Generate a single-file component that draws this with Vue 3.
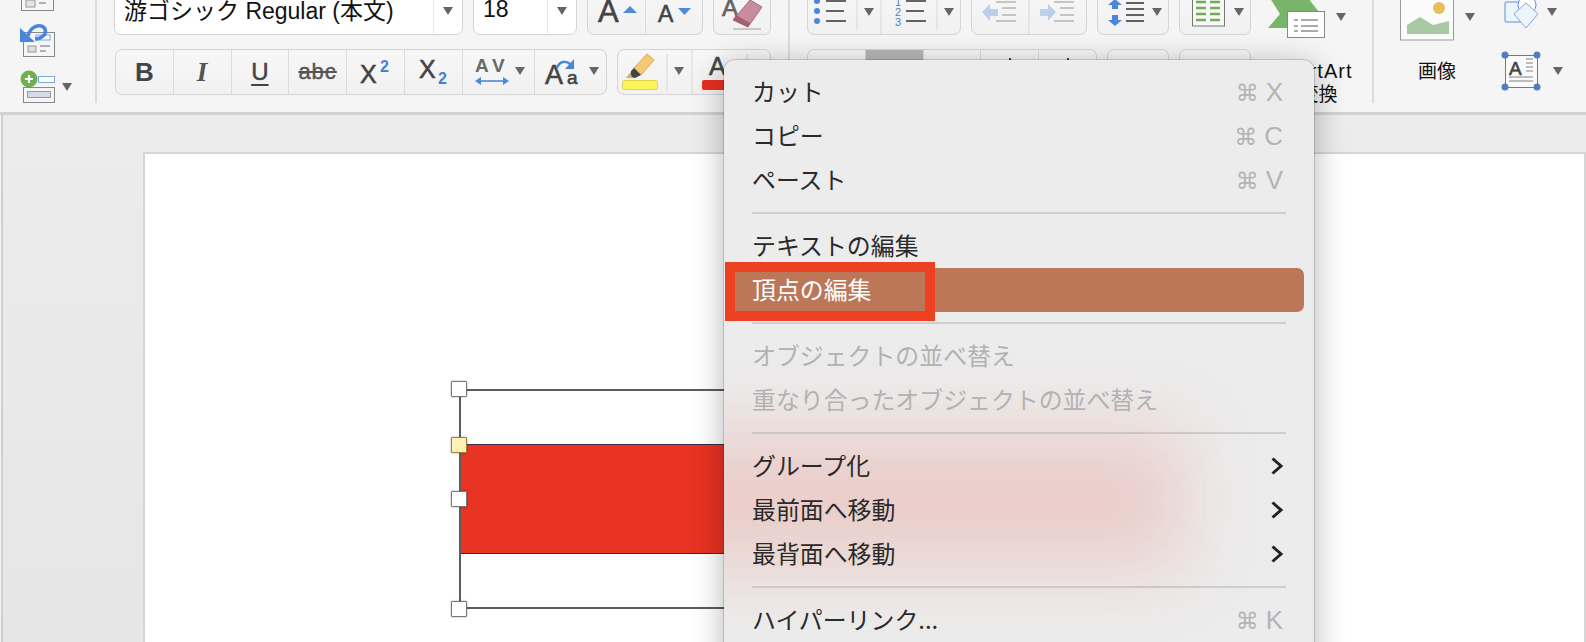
<script setup>
const menuItems = [
  { label: 'カット', shortcut: 'X' },
  { label: 'コピー', shortcut: 'C' },
  { label: 'ペースト', shortcut: 'V' },
  { sep: true },
  { label: 'テキストの編集' },
  { label: '頂点の編集', active: true },
  { sep: true },
  { label: 'オブジェクトの並べ替え', disabled: true },
  { label: '重なり合ったオブジェクトの並べ替え', disabled: true },
  { sep: true },
  { label: 'グループ化', sub: true },
  { label: '最前面へ移動', sub: true },
  { label: '最背面へ移動', sub: true },
  { sep: true },
  { label: 'ハイパーリンク...', shortcut: 'K' },
]
</script>

<template>
  <div class="app">
    <div class="ribbon">
      <section class="sec-left">
        <svg width="96" height="112" viewBox="0 0 96 112">
          <rect x="21.5" y="-5" width="32" height="15.5" fill="#f6f6f6" stroke="#888" />
          <rect x="26" y="0" width="9" height="7" fill="#dfe3ea" stroke="#999" />
          <path d="M39 3h7" stroke="#999" stroke-width="1.5" />
          <rect x="23.5" y="32.5" width="31" height="24" fill="#f6f6f6" stroke="#888" />
          <rect x="36" y="35" width="14" height="5" fill="#fff" stroke="#7da7e0" />
          <rect x="28" y="46" width="8" height="6" fill="#d9dde6" stroke="#999" />
          <path d="M40 46h10M40 51h6" stroke="#999" stroke-width="1.5" />
          <path d="M28 36c2-8 8-11 13-10 5 1 6 7 2 10-2 2-5 3-8 3" fill="none" stroke="#4a86dc" stroke-width="3.5" />
          <path d="M20 28v14h15z" fill="#4a86dc" />
          <rect x="38.5" y="76.5" width="16" height="6" fill="#fff" stroke="#7da7e0" />
          <rect x="23.5" y="87.5" width="31" height="15" fill="#f6f6f6" stroke="#888" />
          <rect x="27.5" y="91.5" width="23" height="6" fill="#d5dbe6" stroke="#999" />
          <circle cx="29" cy="79" r="8.5" fill="#6fb050" />
          <path d="M25 79h8M29 75v8" stroke="#fff" stroke-width="2.2" />
          <path d="M62 83h10l-5 8z" fill="#666" />
        </svg>
      </section>

      <section class="sec-font">
        <div class="row row-top">
          <div class="group field w-font">
            <span class="field-text">游ゴシック Regular (本文)</span>
            <span class="field-sep"></span>
            <span class="drop"></span>
          </div>
          <div class="group field w-size">
            <span class="field-text">18</span>
            <span class="field-sep"></span>
            <span class="drop"></span>
          </div>
          <div class="group w-116">
            <div class="cell w-58">
              <svg width="57" height="47" viewBox="587 -13 57 47">
                <text x="597" y="22" class="svg-m" font-size="31">A</text>
                <path d="M622 13l7-7 7 7z" fill="#4f8ad8" />
              </svg>
            </div>
            <div class="cell w-58 last">
              <svg width="57" height="47" viewBox="645 -13 57 47">
                <text x="657" y="22" class="svg-m" font-size="23">A</text>
                <path d="M677 8h13l-6.500 7z" fill="#4f8ad8" />
              </svg>
            </div>
          </div>
          <div class="group w-58">
            <svg width="56" height="47" viewBox="714 -13 56 47">
              <text x="722" y="16" class="svg-m" font-size="24" fill-opacity=".75">A</text>
              <path d="M733 29h28" stroke="#c8c8c8" stroke-width="2" />
              <path d="M750 0l12 7-14 20-15-7z" fill="#c98c9c" stroke="#a66a7c" />
              <path d="M733 20l15 7 2-4-14-8z" fill="#a55f74" />
            </svg>
          </div>
        </div>

        <div class="row row-bottom">
          <div class="group w-492">
            <div class="cell w-58"><span class="fmt-b">B</span></div>
            <div class="cell w-58"><span class="fmt-i">I</span></div>
            <div class="cell w-58"><span class="fmt-u">U</span></div>
            <div class="cell w-58"><span class="fmt-s">abc</span></div>
            <div class="cell w-58">
              <svg width="57" height="44" viewBox="348 50 57 44">
                <text x="361" y="83" class="svg-m" font-size="25">X</text>
                <text x="381" y="72" class="svg-blue" font-size="16">2</text>
              </svg>
            </div>
            <div class="cell w-58">
              <svg width="57" height="44" viewBox="406 50 57 44">
                <text x="420" y="78" class="svg-m" font-size="25">X</text>
                <text x="439" y="84" class="svg-blue" font-size="16">2</text>
              </svg>
            </div>
            <div class="cell w-72">
              <svg width="71" height="44" viewBox="464 50 71 44">
                <text x="476" y="72" class="svg-grey" font-size="19">A</text>
                <text x="493" y="72" class="svg-grey" font-size="19">V</text>
                <path d="M480 81h26" stroke="#4a86dc" stroke-width="1.600" />
                <path d="M476 81l6-4v8zM510 81l-6-4v8z" fill="#4a86dc" />
                <path d="M516 67h10l-5 8z" fill="#666" />
              </svg>
            </div>
            <div class="cell w-72 last">
              <svg width="71" height="44" viewBox="536 50 71 44">
                <text x="546" y="84" class="svg-m" font-size="27">A</text>
                <text x="568" y="84" class="svg-m" font-size="19">a</text>
                <path d="M558 68c2-7 10-8 14-3" fill="none" stroke="#4a86dc" stroke-width="2.400" />
                <path d="M575 59v10h-9z" fill="#4a86dc" />
                <path d="M590 67h10l-5 8z" fill="#666" />
              </svg>
            </div>
          </div>
          <div class="group w-154">
            <svg width="152" height="44" viewBox="618 50 152 44">
              <path d="M647 54l7 6-13 15-7-7z" fill="#f5c873" stroke="#d8a850" />
              <path d="M634 68l7 7-6 3-5-1 1-6z" fill="#444" />
              <path d="M626 78l4-5 3 5z" fill="#e0a850" />
              <rect x="622.500" y="80.500" width="35" height="9" rx="2" fill="#fbf55a" stroke="#dcd448" />
              <path d="M667 54v36" stroke="#d8d8d8" />
              <path d="M674 67h10l-5 8z" fill="#666" />
              <path d="M692 50v44" stroke="#d8d8d8" />
              <text x="709" y="75" class="svg-m" font-size="25">A</text>
              <rect x="702" y="80" width="34" height="10" rx="2" fill="#e8301f" />
              <path d="M747 54v36" stroke="#d8d8d8" />
            </svg>
          </div>
        </div>
      </section>

      <section class="sec-para">
        <div class="row row-top">
          <div class="group w-154">
            <svg width="152" height="47" viewBox="808 -13 152 47">
              <g fill="#4a86dc"><circle cx="817" cy="1" r="3" /><circle cx="817" cy="11" r="3" /><circle cx="817" cy="21" r="3" /></g>
              <path d="M826 1h20M826 11h18M826 21h20" stroke="#333" stroke-width="1.600" />
              <path d="M857 -13v43" stroke="#d8d8d8" />
              <path d="M864 8h10l-5 8z" fill="#666" />
              <path d="M881 -13v47" stroke="#d8d8d8" />
              <text x="895" y="6" class="svg-num">1</text>
              <text x="895" y="16" class="svg-num">2</text>
              <text x="895" y="26" class="svg-num">3</text>
              <path d="M906 1h20M906 11h18M906 21h20" stroke="#333" stroke-width="1.600" />
              <path d="M937 -13v43" stroke="#d8d8d8" />
              <path d="M944 8h10l-5 8z" fill="#666" />
            </svg>
          </div>
          <div class="group w-116">
            <svg width="114" height="47" viewBox="972 -13 114 47">
              <path d="M982 12l8-8v5h8v7h-8v5z" fill="#bcd0ec" />
              <path d="M996 2h20M1002 8h14M1002 15h14M996 21h20" stroke="#b5b5b5" stroke-width="1.600" />
              <path d="M1029 -13v47" stroke="#d8d8d8" />
              <path d="M1056 12l-8-8v5h-8v7h8v5z" fill="#bcd0ec" />
              <path d="M1054 2h20M1060 8h14M1060 15h14M1054 21h20" stroke="#b5b5b5" stroke-width="1.600" />
            </svg>
          </div>
          <div class="group w-72">
            <svg width="70" height="47" viewBox="1098 -13 70 47">
              <path d="M1115 -1l7 6h-4v4h-6v-4h-4zM1115 26l7-6h-4v-5h-6v5h-4z" fill="#4a86dc" />
              <path d="M1126 3h18M1126 9h18M1126 15h18M1126 21h18" stroke="#333" stroke-width="1.600" />
              <path d="M1152 8h10l-5 8z" fill="#666" />
            </svg>
          </div>
          <div class="group w-72">
            <svg width="70" height="47" viewBox="1180 -13 70 47">
              <rect x="1192.500" y="-4" width="32" height="30" fill="#f8f8f8" stroke="#777" />
              <path d="M1196 2h10M1210 2h10M1196 8h10M1210 8h10M1196 14h10M1210 14h10M1196 20h10M1210 20h10" stroke="#72ab5a" stroke-width="2.400" />
              <path d="M1234 8h10l-5 8z" fill="#666" />
            </svg>
          </div>
        </div>
        <div class="row row-bottom">
          <div class="group w-290">
            <div class="cell w-58"></div>
            <div class="cell w-58 pressed"></div>
            <div class="cell w-58"></div>
            <div class="cell w-58"><span class="tick tick-a"></span></div>
            <div class="cell w-58 last"><span class="tick tick-b"></span></div>
          </div>
          <div class="group w-62"></div>
          <div class="group w-72"></div>
        </div>
      </section>

      <section class="sec-smart">
        <svg width="111" height="40" viewBox="1262 0 111 40">
          <path d="M1270 -2h38l11 14-13 16h-38l12-14z" fill="#78b46a" />
          <rect x="1287.500" y="11.500" width="37" height="26" fill="#fff" stroke="#888" />
          <path d="M1294 20h4M1301 20h17M1294 26h4M1301 26h17M1294 31h4M1301 31h17" stroke="#aaa" stroke-width="1.800" />
          <path d="M1336 13h10l-5 8z" fill="#666" />
        </svg>
        <div class="big-label smart-label">
          <span class="smart-word">SmartArt</span>
          <span>に変換</span>
        </div>
      </section>

      <section class="sec-insert">
        <div class="insert-col">
          <svg width="90" height="42" viewBox="1392 0 90 42">
            <rect x="1400.500" y="-3" width="53" height="43" fill="#fbfbfb" stroke="#999" />
            <path d="M1407 34v-9l13-8 13 8 8-2 8-2v13z" fill="#a9c9a4" />
            <circle cx="1439" cy="8" r="6" fill="#e8c05a" />
            <path d="M1465 13h10l-5 8z" fill="#666" />
          </svg>
          <div class="big-label picture-label">画像</div>
        </div>
        <div class="insert-col">
          <svg width="66" height="42" viewBox="1500 0 66 42">
            <rect x="1505" y="2" width="22" height="20" rx="1" fill="#eef4fc" stroke="#5a8fdc" />
            <circle cx="1527" cy="5" r="9" fill="#fff" stroke="#5a8fdc" />
            <path d="M1526 3l12 11-12 14-12-14z" fill="#eef4fc" stroke="#7da7e0" />
            <path d="M1547 8h10l-5 8z" fill="#666" />
          </svg>
          <svg class="textbox-icon" width="70" height="44" viewBox="1498 50 70 44">
            <rect x="1505.500" y="55.500" width="32" height="32" fill="#fafafa" stroke="#777" />
            <text x="1509" y="75" class="svg-m" font-size="19">A</text>
            <path d="M1526 59h7M1526 63h7M1526 67h7M1526 71h7M1509 77h24M1509 81h24" stroke="#aaa" stroke-width="1.500" />
            <g fill="#4f7fc0"><circle cx="1505" cy="55" r="3.500" /><circle cx="1537" cy="55" r="3.500" /><circle cx="1505" cy="87" r="3.500" /><circle cx="1537" cy="87" r="3.500" /></g>
            <path d="M1553 67h10l-5 8z" fill="#666" />
          </svg>
        </div>
      </section>
    </div>

    <div class="canvas">
      <div class="page">
        <div class="shape">
          <div class="band"></div>
          <span class="handle h1"></span>
          <span class="handle h2"></span>
          <span class="handle h3"></span>
          <span class="handle h4"></span>
        </div>
      </div>
    </div>

    <div class="menu">
      <div class="glow"></div>
      <template v-for="(item, i) in menuItems" :key="i">
        <div v-if="item.sep" class="menu-sep"></div>
        <div v-else class="menu-row" :class="{ active: item.active, disabled: item.disabled }">
          <span class="menu-label">{{ item.label }}</span>
          <span v-if="item.shortcut" class="shortcut"><span class="cmd">⌘</span>{{ item.shortcut }}</span>
          <svg v-if="item.sub" width="12" height="18" viewBox="0 0 12 18">
            <path d="M1.500 1.500L10 9l-8.500 7.500" fill="none" stroke="#222" stroke-width="3" />
          </svg>
        </div>
      </template>
    </div>
    <div class="callout"></div>
  </div>
</template>

<style>
html, body {
  margin: 0;
  background: #f5f5f5;
}
</style>

<style scoped>
.app {
  position: relative;
  width: 1586px;
  height: 642px;
  overflow: hidden;
  display: flex;
  flex-direction: column;
  font-family: "Liberation Sans", "Noto Sans CJK JP", sans-serif;
}

.ribbon {
  flex: none;
  display: flex;
  height: 112px;
  overflow: hidden;
  background: #f5f5f5;
  border-bottom: 3px solid #d2d2d2;
}

section {
  flex: none;
  box-sizing: border-box;
  height: 103px;
}

.sec-left {
  width: 97px;
  border-right: 2px solid #dcdcdc;
}

.sec-left svg {
  display: block;
}

.sec-font {
  width: 693px;
  padding-left: 17px;
  border-right: 2px solid #dcdcdc;
}

.sec-para {
  width: 472px;
  padding-left: 17px;
}

.sec-smart {
  width: 112px;
  border-right: 2px solid #dcdcdc;
  display: flex;
  flex-direction: column;
}

.sec-smart svg {
  flex: none;
}

.sec-insert {
  display: flex;
  padding-left: 18px;
  gap: 18px;
}

.row {
  display: flex;
  gap: 10px;
}

.row-top {
  height: 49px;
  margin-top: -14px;
}

.row-bottom {
  height: 46px;
  margin-top: 14px;
}

.group {
  box-sizing: border-box;
  display: flex;
  align-items: stretch;
  border: 1.500px solid #d4d4d4;
  border-radius: 7px;
  background: linear-gradient(#f7f7f7, #f1f1f1);
}

.group svg {
  display: block;
}

.cell {
  box-sizing: border-box;
  display: flex;
  align-items: center;
  justify-content: center;
  flex: 1;
  border-right: 1.500px solid #dcdcdc;
  color: #444;
}

.cell.last {
  border-right: none;
}

.pressed {
  background: linear-gradient(#b5b5b5, #c8c8c8);
}

.w-font { width: 349px; }
.w-size { width: 104px; }
.w-58 { width: 58px; }
.w-62 { width: 62px; }
.w-72 { width: 72px; }
.w-116 { width: 116px; }
.w-154 { width: 154px; }
.w-290 { width: 290px; }
.w-492 { width: 492px; margin-left: 1px; }

.field {
  position: relative;
  align-items: center;
  background: #fff;
  color: #111;
  font-size: 23px;
  padding-left: 9px;
}

.field-text {
  flex: 1;
  white-space: nowrap;
  padding-bottom: 3px;
}

.field-sep {
  width: 1.500px;
  height: 46px;
  background: #e6e6e6;
  margin-right: 9px;
}

.drop {
  width: 0;
  height: 0;
  border-left: 5px solid transparent;
  border-right: 5px solid transparent;
  border-top: 8px solid #666;
  margin-right: 9px;
}

.fmt-b {
  font-size: 26px;
  font-weight: 700;
}

.fmt-i {
  font-family: "Liberation Serif", serif;
  font-size: 27px;
  font-style: italic;
  font-weight: 700;
  color: #555;
}

.fmt-u {
  font-size: 24px;
  -webkit-text-stroke: 0.5px #444;
  text-decoration: underline;
  text-underline-offset: 4px;
  text-decoration-thickness: 2px;
}

.fmt-s {
  font-size: 22px;
  letter-spacing: 1px;
  -webkit-text-stroke: 0.4px #555;
  text-decoration: line-through;
  color: #555;
}

.svg-m,
.svg-grey,
.svg-blue,
.svg-num {
  font-family: "Liberation Sans", sans-serif;
}

.svg-m {
  fill: #444;
  stroke: #444;
  stroke-width: 0.6px;
}

.svg-grey {
  fill: #6a6a6a;
  font-weight: 700;
}

.svg-blue {
  fill: #4a7fd0;
  font-weight: 700;
}

.svg-num {
  fill: #4a7fd0;
  font-size: 11px;
}

.tick {
  align-self: flex-start;
  width: 2px;
  height: 4px;
  margin-top: 8px;
  background: #444;
}

.big-label {
  display: flex;
  flex-direction: column;
  align-items: center;
  margin-top: 19px;
  font-size: 19px;
  line-height: 26px;
  color: #111;
}

.smart-label {
  flex: none;
  padding-right: 16px;
  line-height: 24px;
}

.smart-word {
  font-size: 20px;
  letter-spacing: 1px;
}

.picture-label {
  margin-top: 17px;
}

.insert-col {
  display: flex;
  flex-direction: column;
}

.insert-col svg {
  display: block;
}

.textbox-icon {
  margin-top: 8px;
  margin-left: -2px;
}

.canvas {
  flex: 1;
  box-sizing: border-box;
  display: flex;
  padding: 37px 0 0 140px;
  background: linear-gradient(#ececec, #e6e6e6);
  border-left: 2px solid #cfcfcf;
  margin-left: 1px;
  min-height: 0;
}

.page {
  position: relative;
  flex: 1;
  background: #fff;
  border: 2px solid #d6d6d6;
  border-bottom: none;
}

.shape {
  position: absolute;
  left: 314px;
  top: 235px;
  box-sizing: border-box;
  width: 420px;
  height: 220px;
  border: 2px solid #5c5c5c;
}

.band {
  position: absolute;
  left: 0;
  top: 53px;
  right: 0;
  box-sizing: border-box;
  height: 110px;
  background: #e93323;
  border-top: 1px solid #3c2a4c;
  border-bottom: 1px solid #3c2a4c;
}

.handle {
  position: absolute;
  left: -10px;
  box-sizing: border-box;
  width: 16px;
  height: 16px;
  background: #fff;
  border: 1px solid #777;
  border-radius: 1px;
  box-shadow: 0 0 2px rgba(0, 0, 0, 0.4);
}

.h1 { top: -10px; }
.h2 { top: 46px; background: #fdf0b5; border-color: #a08040; }
.h3 { top: 100px; }
.h4 { top: 210px; }

.menu {
  position: absolute;
  left: 724px;
  top: 60px;
  box-sizing: border-box;
  width: 590px;
  height: 640px;
  padding-top: 10px;
  overflow: hidden;
  background: #ececec;
  border-radius: 11px 11px 0 0;
  box-shadow: 0 0 0 1px rgba(0, 0, 0, 0.15), 0 6px 32px rgba(0, 0, 0, 0.3);
  font-family: "Noto Sans CJK JP", sans-serif;
  font-size: 23.900px;
  color: #2a2a2a;
}

.glow {
  position: absolute;
  left: -160px;
  top: 372px;
  width: 620px;
  height: 136px;
  background: rgba(228, 60, 35, 0.17);
  filter: blur(38px);
}

.menu-row {
  position: relative;
  display: flex;
  align-items: center;
  justify-content: space-between;
  height: 44px;
  margin: 0 10px 0 5px;
  padding: 0 21px 0 23px;
  border-radius: 7px;
  white-space: nowrap;
}

.menu-label {
  margin-top: -3px;
}

.menu-row.active {
  background: #bc7759;
  color: #fff;
}

.menu-row.disabled {
  color: #b2b2b2;
}

.shortcut {
  font-family: "Liberation Sans", sans-serif;
  font-size: 26px;
  color: #b4b4b4;
}

.cmd {
  font-family: "DejaVu Sans", sans-serif;
  font-size: 23px;
  margin-right: 7px;
}

.menu-sep {
  position: relative;
  height: 2px;
  margin: 10px 28px;
  background: rgba(120, 120, 120, 0.25);
}

.callout {
  position: absolute;
  left: 725px;
  top: 262px;
  box-sizing: border-box;
  width: 210px;
  height: 59px;
  border: 10px solid #ee4023;
}
</style>
